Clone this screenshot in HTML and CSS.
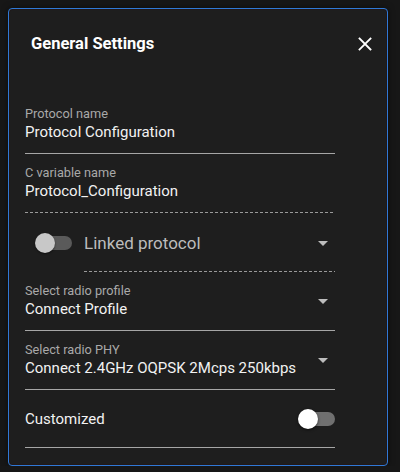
FILE: index.html
```html
<!DOCTYPE html>
<html lang="en">
<head>
<meta charset="utf-8">
<title>General Settings</title>
<link rel="stylesheet" href="styles.css">
</head>
<body>
<div class="card">
  <div class="header">
    <h2 class="title">General Settings</h2>
    <button class="close" aria-label="Close">
      <svg width="14" height="14" viewBox="0 0 14 14"><path d="M1.5 1.5L12.5 12.5M12.5 1.5L1.5 12.5" stroke="#ffffff" stroke-width="1.8" stroke-linecap="square"/></svg>
    </button>
  </div>
  <div class="content">
    <div class="field">
      <div class="label">Protocol name</div>
      <div class="value">Protocol Configuration</div>
    </div>
    <div class="field field-dashed">
      <div class="label">C variable name</div>
      <div class="value">Protocol_Configuration</div>
    </div>
    <div class="linked-row">
      <div class="switch switch-off">
        <span class="track"></span>
        <span class="thumb"></span>
      </div>
      <div class="linked-select">
        <span class="linked-text">Linked protocol</span>
        <svg class="arrow" width="24" height="24" viewBox="0 0 24 24"><path d="M7 10l5 5 5-5z" fill="#bdbdbd"/></svg>
      </div>
    </div>
    <div class="field field-select">
      <div class="select-text">
        <div class="label">Select radio profile</div>
        <div class="value">Connect Profile</div>
      </div>
      <svg class="arrow" width="24" height="24" viewBox="0 0 24 24"><path d="M7 10l5 5 5-5z" fill="#bdbdbd"/></svg>
    </div>
    <div class="field field-select">
      <div class="select-text">
        <div class="label">Select radio PHY</div>
        <div class="value">Connect 2.4GHz OQPSK 2Mcps 250kbps</div>
      </div>
      <svg class="arrow" width="24" height="24" viewBox="0 0 24 24"><path d="M7 10l5 5 5-5z" fill="#bdbdbd"/></svg>
    </div>
    <div class="custom-row">
      <span class="custom-text">Customized</span>
      <div class="switch switch-white">
        <span class="track"></span>
        <span class="thumb"></span>
      </div>
    </div>
  </div>
</div>
</body>
</html>
```

FILE: styles.css
```css
html, body {
  margin: 0;
  padding: 0;
  background: #171717;
  font-family: Roboto, "Liberation Sans", Arial, sans-serif;
  overflow: hidden;
}

.card {
  margin: 8px 0 0 8px;
  width: 380px;
  box-sizing: border-box;
  border: 1px solid #2f79d6;
  border-radius: 4px;
  background: #1e1e1e;
  box-shadow: inset 0 0 0 1px #221818, 0 0 6px rgba(0,0,0,0.5);
}

.header {
  display: flex;
  justify-content: space-between;
  align-items: center;
  padding: 24px 15px 0 22px;
  height: 22px;
}

.title {
  margin: 0;
  font-size: 16.5px;
  line-height: 22px;
  font-weight: 700;
  color: #ffffff;
}

.close {
  background: none;
  border: 0;
  padding: 0;
  width: 14px;
  height: 14px;
  display: flex;
}

.content {
  padding: 51px 52px 17px 16px;
}

.field {
  padding-bottom: 11px;
  border-bottom: 1px solid #a6a6a6;
}

.field + .field,
.linked-row + .field {
  margin-top: 11px;
}

.field-dashed {
  border-bottom: 0;
  padding-bottom: 12px;
  background-image: linear-gradient(to right, #9a9a9a 60%, transparent 60%);
  background-size: 5px 1px;
  background-repeat: repeat-x;
  background-position: left bottom;
}

.label {
  font-size: 12.75px;
  line-height: 16px;
  color: #a9a9a9;
}

.value {
  font-size: 15px;
  line-height: 20px;
  color: #f2f2f2;
}

.field-select {
  display: flex;
  align-items: center;
  justify-content: space-between;
}

.arrow {
  display: block;
  flex: none;
}

.linked-row {
  display: flex;
  align-items: stretch;
  height: 59px;
}

.linked-row .switch {
  margin-left: 10px;
  align-self: center;
}

.linked-select {
  flex: 1;
  margin-left: 12px;
  display: flex;
  align-items: center;
  justify-content: space-between;
  background-image: linear-gradient(to right, #9a9a9a 60%, transparent 60%);
  background-size: 5px 1px;
  background-repeat: repeat-x;
  background-position: left bottom;
}

.linked-text {
  font-size: 17px;
  color: #bcbcbc;
}

.switch {
  position: relative;
  width: 37px;
  height: 20px;
  flex: none;
}

.switch .track {
  position: absolute;
  left: 3px;
  top: 3px;
  width: 34px;
  height: 14px;
  border-radius: 7px;
}

.switch .thumb {
  position: absolute;
  left: 0;
  top: 0;
  width: 20px;
  height: 20px;
  border-radius: 50%;
}

.switch-off .track {
  background: #5a5a5a;
}

.switch-off .thumb {
  background: #c8c8c8;
  box-shadow: 0 1px 2px rgba(0,0,0,0.5);
}

.switch-white .track {
  background: #707070;
}

.switch-white .thumb {
  background: #ffffff;
  box-shadow: 0 1px 3px rgba(0,0,0,0.6);
}

.custom-row {
  display: flex;
  align-items: center;
  justify-content: space-between;
  height: 57px;
  border-bottom: 1px solid #a6a6a6;
}

.custom-text {
  font-size: 15px;
  color: #f2f2f2;
}
```
